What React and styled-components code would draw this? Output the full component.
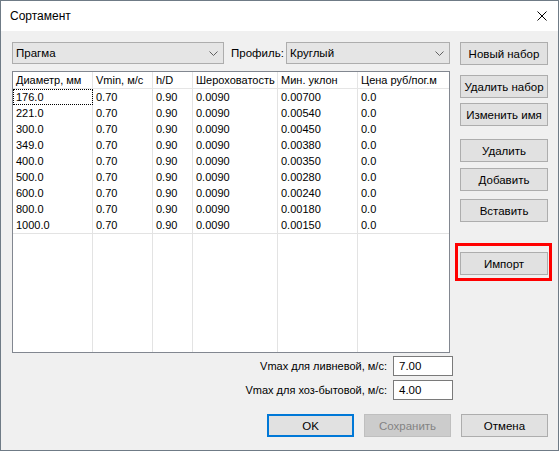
import React from "react";
import styled, { createGlobalStyle } from "styled-components";

const GlobalStyle = createGlobalStyle`
  html, body { margin: 0; padding: 0; background: #ffffff; }
  body { font-family: "Liberation Sans", Arial, sans-serif; }
  #root { width: 559px; height: 451px; }
  * { box-sizing: border-box; }
`;

const Window = styled.div`
  width: 559px;
  height: 451px;
  border: 1px solid #6f7b86;
  background: #f0f0f0;
  display: flex;
  flex-direction: column;
  overflow: hidden;
`;

const TitleBar = styled.div`
  height: 30px;
  flex: none;
  background: #ffffff;
  display: flex;
  align-items: center;
  justify-content: space-between;
  padding: 0 11px 0 9px;
`;

const Title = styled.span`
  font-size: 12px;
  color: #000;
`;

const Body = styled.div`
  display: flex;
  flex-direction: column;
  padding: 11px 10px 0 11px;
`;

const MainRow = styled.div`
  display: flex;
  align-items: flex-start;
`;

const LeftCol = styled.div`
  width: 438px;
  display: flex;
  flex-direction: column;
`;

const TopBar = styled.div`
  display: flex;
  align-items: center;
  height: 22px;
`;

const Combo = styled.div`
  width: ${(p) => p.$w}px;
  height: 22px;
  margin-left: ${(p) => p.$ml || "0"};
  background: #e5e5e5;
  border: 1px solid #adadad;
  display: flex;
  align-items: center;
  justify-content: space-between;
  padding: 0 5px 0 3px;
  font-size: 11.5px;
  color: #000;
`;

const Label = styled.span`
  font-size: ${(p) => p.$fs || 11.5}px;
  color: #000;
  margin-left: ${(p) => p.$ml || 0}px;
  white-space: nowrap;
`;

const Table = styled.div`
  margin-top: 7px;
  height: 282px;
  background: #ffffff;
  border: 1px solid #828790;
  display: flex;
  flex-direction: column;
`;

const COLS = "80px 60px 40px 85px 80px 1fr";

const HeaderRow = styled.div`
  display: grid;
  grid-template-columns: ${COLS};
  height: 17px;
  border-bottom: 1px solid #e5e5e5;
`;

const HeaderCell = styled.div`
  border-right: 1px solid #e5e5e5;
  padding-left: 3px;
  font-size: 11px;
  line-height: 16px;
  white-space: nowrap;
  overflow: hidden;
  color: #000;
  &:last-child { border-right: none; }
`;

const Row = styled.div`
  display: grid;
  grid-template-columns: ${COLS};
  height: 16px;
`;

const Cell = styled.div`
  border-right: 1px solid #e3e3e3;
  padding-left: 3px;
  font-size: 11px;
  line-height: 16px;
  white-space: nowrap;
  overflow: hidden;
  color: #000;
  outline: ${(p) => (p.$focus ? "1px dotted #000" : "none")};
  outline-offset: -1px;
  &:last-child { border-right: none; }
`;

const FillerRow = styled.div`
  flex: 1;
  display: grid;
  grid-template-columns: ${COLS};
  border-top: 1px solid #e3e3e3;
`;

const RightCol = styled.div`
  width: 88px;
  margin-left: 10px;
  display: flex;
  flex-direction: column;
`;

const Button = styled.button`
  width: ${(p) => (p.$w ? `${p.$w}px` : "100%")};
  height: 23px;
  margin: ${(p) => p.$mt || 0}px 0 0 0;
  padding: 0;
  background: ${(p) => (p.disabled ? "#cccccc" : "#e1e1e1")};
  border: ${(p) =>
    p.$default ? "2px solid #0078d7" : p.disabled ? "1px solid #bfbfbf" : "1px solid #adadad"};
  font-family: "Liberation Sans", Arial, sans-serif;
  font-size: 11.5px;
  color: ${(p) => (p.disabled ? "#838383" : "#000")};
  display: flex;
  align-items: center;
  justify-content: center;
  flex: none;
`;

const Highlight = styled.div`
  position: relative;
  margin-top: ${(p) => p.$mt}px;
  &::after {
    content: "";
    position: absolute;
    top: -9px;
    left: -5px;
    right: -4px;
    bottom: -6px;
    border: 3px solid #ff0000;
    pointer-events: none;
  }
`;

const Fields = styled.div`
  display: flex;
  flex-direction: column;
  align-items: flex-end;
  gap: 4px;
  margin-top: 3px;
  padding-right: 95px;
`;

const FieldRow = styled.div`
  display: flex;
  align-items: center;
  gap: 6px;
`;

const Input = styled.div`
  width: 60px;
  height: 20px;
  background: #ffffff;
  border: 1px solid #7a7a7a;
  padding-left: 5px;
  font-size: 11.5px;
  line-height: 18px;
  color: #000;
`;

const Footer = styled.div`
  display: flex;
  justify-content: flex-end;
  gap: 10px;
  margin-top: 14px;
`;

const Chevron = () => (
  <svg width="9" height="5" viewBox="0 0 9 5">
    <polyline points="0.5,0.5 4.5,4.5 8.5,0.5" fill="none" stroke="#606060" strokeWidth="1" />
  </svg>
);

const CloseIcon = () => (
  <svg width="10" height="10" viewBox="0 0 10 10">
    <path d="M0.5 0.5 L9.5 9.5 M9.5 0.5 L0.5 9.5" stroke="#000" strokeWidth="1" fill="none" />
  </svg>
);

const headers = ["Диаметр, мм", "Vmin, м/с", "h/D", "Шероховатость", "Мин. уклон", "Цена руб/пог.м"];
const rows = [
  ["176.0", "0.00700"],
  ["221.0", "0.00540"],
  ["300.0", "0.00450"],
  ["349.0", "0.00380"],
  ["400.0", "0.00350"],
  ["500.0", "0.00280"],
  ["600.0", "0.00240"],
  ["800.0", "0.00180"],
  ["1000.0", "0.00150"],
];

export default function App() {
  return (
    <>
      <GlobalStyle />
      <Window>
        <TitleBar>
          <Title>Сортамент</Title>
          <CloseIcon />
        </TitleBar>
        <Body>
          <MainRow>
            <LeftCol>
              <TopBar>
                <Combo $w={212}>
                  <span>Прагма</span>
                  <Chevron />
                </Combo>
                <Label $ml={7}>Профиль:</Label>
                <Combo $w={164} $ml="auto">
                  <span>Круглый</span>
                  <Chevron />
                </Combo>
              </TopBar>
              <Table>
                <HeaderRow>
                  {headers.map((h) => (
                    <HeaderCell key={h}>{h}</HeaderCell>
                  ))}
                </HeaderRow>
                {rows.map(([d, slope], i) => (
                  <Row key={d}>
                    <Cell $focus={i === 0}>{d}</Cell>
                    <Cell>0.70</Cell>
                    <Cell>0.90</Cell>
                    <Cell>0.0090</Cell>
                    <Cell>{slope}</Cell>
                    <Cell>0.0</Cell>
                  </Row>
                ))}
                <FillerRow>
                  {headers.map((h) => (
                    <Cell key={h} />
                  ))}
                </FillerRow>
              </Table>
            </LeftCol>
            <RightCol>
              <Button>Новый набор</Button>
              <Button $mt={10}>Удалить набор</Button>
              <Button $mt={5}>Изменить имя</Button>
              <Button $mt={13}>Удалить</Button>
              <Button $mt={6}>Добавить</Button>
              <Button $mt={8}>Вставить</Button>
              <Highlight $mt={30}>
                <Button>Импорт</Button>
              </Highlight>
            </RightCol>
          </MainRow>
          <Fields>
            <FieldRow>
              <Label $fs={11}>Vmax для ливневой, м/с:</Label>
              <Input>7.00</Input>
            </FieldRow>
            <FieldRow>
              <Label $fs={11}>Vmax для хоз-бытовой, м/с:</Label>
              <Input>4.00</Input>
            </FieldRow>
          </Fields>
          <Footer>
            <Button $w={87} $default>OK</Button>
            <Button $w={87} disabled>Сохранить</Button>
            <Button $w={87}>Отмена</Button>
          </Footer>
        </Body>
      </Window>
    </>
  );
}
